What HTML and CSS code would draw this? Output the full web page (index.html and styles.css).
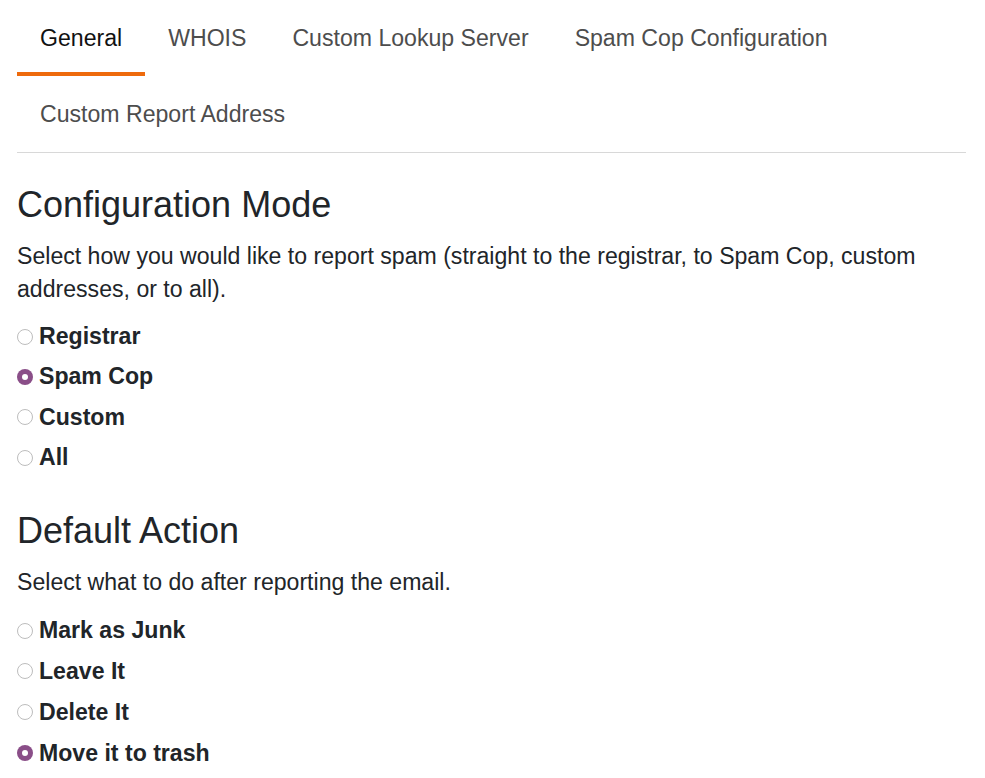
FILE: index.html
```html
<!DOCTYPE html>
<html lang="en">
<head>
<meta charset="utf-8">
<title>Settings</title>
<link rel="stylesheet" href="styles.css">
</head>
<body>
<div class="page">
  <nav class="tabs">
    <a class="tab active">General</a>
    <a class="tab">WHOIS</a>
    <a class="tab">Custom Lookup Server</a>
    <a class="tab">Spam Cop Configuration</a>
    <a class="tab">Custom Report Address</a>
  </nav>

  <section class="section first">
    <h2 class="title">Configuration Mode</h2>
    <p class="desc">Select how you would like to report spam (straight to the registrar, to Spam Cop, custom addresses, or to all).</p>
    <div class="options">
      <label class="option"><span class="radio"></span>Registrar</label>
      <label class="option"><span class="radio checked"></span>Spam Cop</label>
      <label class="option"><span class="radio"></span>Custom</label>
      <label class="option"><span class="radio"></span>All</label>
    </div>
  </section>

  <section class="section second">
    <h2 class="title">Default Action</h2>
    <p class="desc">Select what to do after reporting the email.</p>
    <div class="options">
      <label class="option"><span class="radio"></span>Mark as Junk</label>
      <label class="option"><span class="radio"></span>Leave It</label>
      <label class="option"><span class="radio"></span>Delete It</label>
      <label class="option"><span class="radio checked"></span>Move it to trash</label>
    </div>
  </section>
</div>
</body>
</html>
```
FILE: styles.css
```css
html, body {
  margin: 0;
  padding: 0;
  background: #ffffff;
}

body {
  font-family: "Liberation Sans", Arial, sans-serif;
  color: #212529;
}

.page {
  padding: 0 19px 0 17px;
}

.tabs {
  display: flex;
  flex-wrap: wrap;
  border-bottom: 1px solid #d8d8d8;
}

.tab {
  display: block;
  height: 68px;
  line-height: 68px;
  padding: 4px 23px 0;
  font-size: 23.1px;
  color: #4d4d4d;
  border-bottom: 4px solid transparent;
  cursor: pointer;
  white-space: nowrap;
}

.tab.active {
  color: #111111;
  border-bottom-color: #ee6a0c;
}

.section {
  margin-top: 35px;
}

.section.first {
  margin-top: 30px;
}

.title {
  margin: 0 0 14px;
  font-size: 36px;
  font-weight: normal;
  line-height: 43px;
  color: #212529;
}

.desc {
  margin: 0 0 14px;
  font-size: 23.1px;
  line-height: 33px;
  color: #212529;
}

.second .desc {
  margin-bottom: 15px;
}

.options {
  display: flex;
  flex-direction: column;
  gap: 7.4px;
}

.second .options {
  gap: 7.8px;
}

.option {
  display: flex;
  align-items: center;
  gap: 6px;
  font-size: 23.1px;
  font-weight: bold;
  line-height: 33px;
  color: #212529;
}

.radio {
  box-sizing: border-box;
  width: 16px;
  height: 16px;
  border-radius: 50%;
  border: 1px solid #bdbdbd;
  background: #ffffff;
  flex: none;
  position: relative;
}

.radio.checked {
  border: none;
  background: #8a4e88;
}

.radio.checked::after {
  content: "";
  position: absolute;
  left: 5px;
  top: 5px;
  width: 6px;
  height: 6px;
  border-radius: 50%;
  background: #ffffff;
}
```
